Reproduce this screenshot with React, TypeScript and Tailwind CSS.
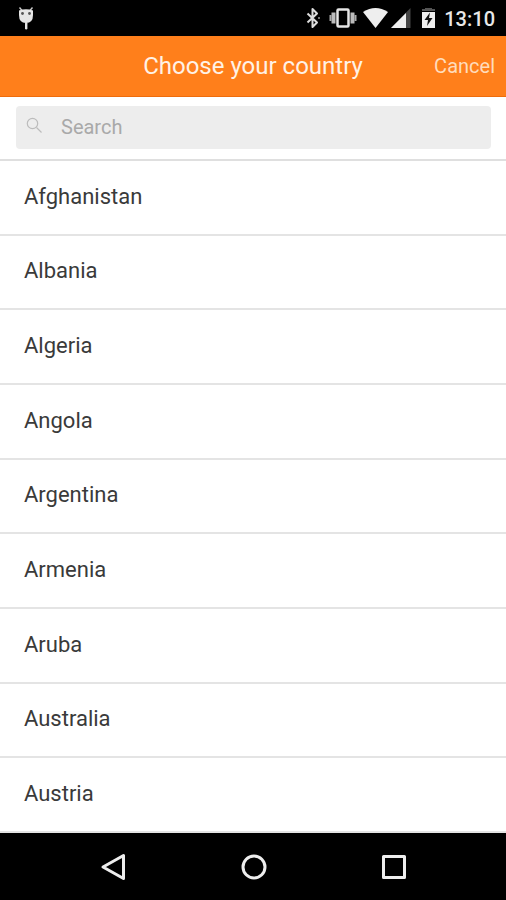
const countries = [
  'Afghanistan',
  'Albania',
  'Algeria',
  'Angola',
  'Argentina',
  'Armenia',
  'Aruba',
  'Australia',
  'Austria',
];

function DebugIcon() {
  return (
    <svg width="16" height="24" viewBox="0 0 16 24" fill="#e6e6e6" aria-hidden="true">
      <path d="M1.5 1.500 4 4.500M14.5 1.500 12 4.500" stroke="#ccc" strokeWidth="1.4" />
      <path d="M1 4.500Q8 2 15 4.500L15 9Q15 17 8 17Q1 17 1 9Z" />
      <rect x="7" y="16" width="2.4" height="7.500" rx="1.2" />
      <circle cx="4.5" cy="7.500" r="1.4" fill="#555" />
      <circle cx="11.5" cy="7.500" r="1.4" fill="#555" />
    </svg>
  );
}

function StatusIcons() {
  return (
    <svg width="132" height="24" viewBox="0 0 132 24" fill="none" aria-hidden="true">
      <path d="M2.500 7.500 12 16.500 7.500 21V3L12 7.500 2.500 16.500" stroke="#ddd" strokeWidth="2" strokeLinejoin="round" />
      <path d="M14 11v2" stroke="#999" strokeWidth="1.500" />
      <rect x="32.500" y="3.500" width="11" height="17" rx="1" stroke="#e5e5e5" strokeWidth="2.500" />
      <path d="M28.500 6.500v11M47.500 6.500v11" stroke="#bbb" strokeWidth="4" />
      <path d="M25.500 9v6M50.500 9v6" stroke="#aaa" strokeWidth="2" />
      <path d="M58 6Q70.500-2 83 6L70.500 22Z" fill="#eee" />
      <path d="M105.500 2V22H86Z" fill="#444" />
      <path d="M101 7V22H86Z" fill="#eee" />
      <path d="M117 5V3h3V2h7v1h3v2Z" fill="#555" />
      <path d="M117 6h13v16h-13Z" fill="#eee" />
      <path d="M125 6.500 119.500 14h3.500l-1 6 5.500-8H124Z" fill="#111" />
    </svg>
  );
}

function StatusBar() {
  return (
    <div className="flex h-9 items-center bg-black pr-[11px] pl-[18px] text-[#e8e8e8]">
      <DebugIcon />
      <div className="ml-auto flex items-center gap-[7px]">
        <StatusIcons />
        <time className="pt-0.5 text-[20px] leading-6 font-medium">13:10</time>
      </div>
    </div>
  );
}

function Header() {
  return (
    <header className="grid h-[61px] grid-cols-[1fr_auto_1fr] items-center border-b border-[#ee6c0c] bg-[#ff7f1b] px-[11px]">
      <h1 className="col-start-2 text-[24px] leading-8 text-[#fff2e6]">Choose your country</h1>
      <button type="button" className="justify-self-end text-[20px] leading-8 text-[#ffdcbc]">
        Cancel
      </button>
    </header>
  );
}

function SearchBar() {
  return (
    <div className="border-b-2 border-[#dfdfdf] bg-white pt-[9px] pr-[15px] pb-[10px] pl-4">
      <label className="flex h-[43px] items-center gap-[18px] rounded bg-[#ededed] pb-0.5 pl-[10px]">
        <svg width="17" height="17" viewBox="0 0 17 17" fill="none" stroke="#bcbcbc" strokeWidth="1.200" className="mb-0.5" aria-hidden="true">
          <circle cx="6.500" cy="6.500" r="5.200" />
          <path d="m10.500 10.500 5 5" />
        </svg>
        <input
          type="search"
          aria-label="Search"
          placeholder="Search"
          className="min-w-0 flex-1 bg-transparent text-[20px] leading-6 text-[#333] outline-none placeholder:text-[#a9a9a9]"
        />
      </label>
    </div>
  );
}

function NavBar() {
  return (
    <nav className="flex h-[67px] items-center justify-between bg-black pr-[98px] pl-[100px]">
      <button type="button" aria-label="Back">
        <svg width="28" height="28" viewBox="0 0 28 28" fill="none" stroke="#eee" strokeWidth="3" strokeLinejoin="round">
          <path d="M3 14 23.500 2.500v23Z" />
        </svg>
      </button>
      <button type="button" aria-label="Home">
        <svg width="28" height="28" viewBox="0 0 28 28" fill="none" stroke="#eee" strokeWidth="3">
          <circle cx="14" cy="14" r="11" />
        </svg>
      </button>
      <button type="button" aria-label="Recent apps">
        <svg width="28" height="28" viewBox="0 0 28 28" fill="none" stroke="#eee" strokeWidth="3" strokeLinejoin="round">
          <rect x="3.500" y="3.500" width="21" height="21" />
        </svg>
      </button>
    </nav>
  );
}

export default function App() {
  return (
    <div className="flex min-h-screen flex-col bg-white font-[Roboto,sans-serif]">
      <StatusBar />
      <Header />
      <SearchBar />
      <ul className="grid flex-1 auto-rows-fr">
        {countries.map((name) => (
          <li key={name} className="flex border-b-2 border-[#e4e4e4]">
            <button type="button" className="flex-1 px-6 pt-[19px] pb-5 text-left text-[22px] leading-8 text-[#3a3a3a]">
              {name}
            </button>
          </li>
        ))}
      </ul>
      <NavBar />
    </div>
  );
}
